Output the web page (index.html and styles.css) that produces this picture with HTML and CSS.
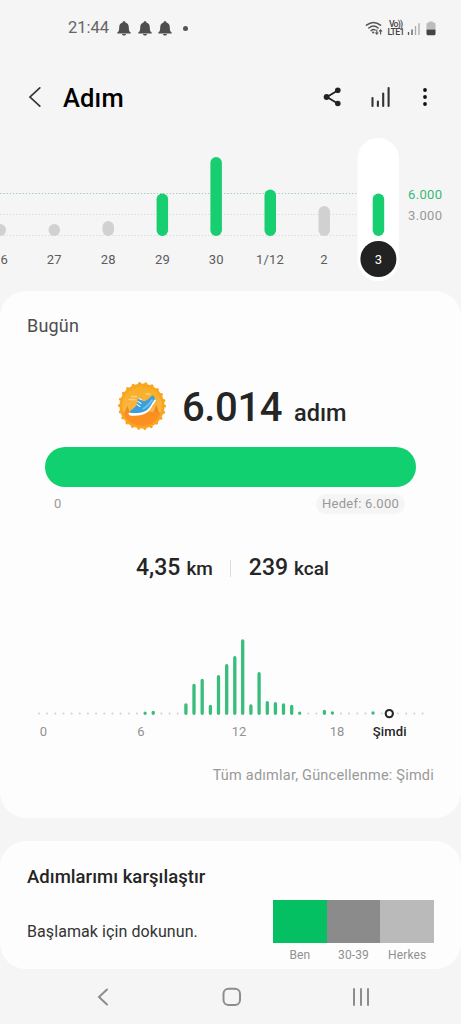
FILE: index.html
```html
<!DOCTYPE html>
<html lang="tr">
<head>
<meta charset="utf-8">
<title>Adım</title>
<link rel="stylesheet" href="styles.css">
</head>
<body>
<div class="screen">
  <div class="status">
    <div class="status-left">
      <span class="clock">21:44</span>
      <svg class="bell" viewBox="0 0 14 15"><path d="M7 .3c.9 0 1.400.5 1.400 1.300 2.400.7 3.400 2.500 3.400 4.900 0 2.800.4 3.900 1.900 5.100v1H.3v-1C1.800 10.400 2.200 9.300 2.200 6.500c0-2.400 1-4.200 3.400-4.900C5.600.8 6.100.3 7 .3zM5 13h4c-.2 1-1 1.600-2 1.600S5.200 14 5 13z"/></svg>
      <svg class="bell" viewBox="0 0 14 15"><path d="M7 .3c.9 0 1.400.5 1.400 1.300 2.400.7 3.400 2.500 3.400 4.900 0 2.800.4 3.900 1.900 5.100v1H.3v-1C1.800 10.400 2.200 9.300 2.200 6.500c0-2.400 1-4.200 3.400-4.900C5.600.8 6.100.3 7 .3zM5 13h4c-.2 1-1 1.600-2 1.600S5.200 14 5 13z"/></svg>
      <svg class="bell" viewBox="0 0 14 15"><path d="M7 .3c.9 0 1.400.5 1.400 1.300 2.400.7 3.400 2.500 3.400 4.900 0 2.800.4 3.900 1.900 5.100v1H.3v-1C1.800 10.400 2.200 9.300 2.200 6.500c0-2.400 1-4.200 3.400-4.900C5.600.8 6.100.3 7 .3zM5 13h4c-.2 1-1 1.600-2 1.600S5.200 14 5 13z"/></svg>
      <span class="more-dot"></span>
    </div>
    <svg class="status-right" viewBox="0 0 72 18">
      <g fill="none" stroke="#555" stroke-width="1.500" stroke-linecap="round">
        <path d="M1.500 6.200Q8.500 .8 15.500 6.200"/><path d="M3.800 9Q8.500 5.200 13.200 9"/><path d="M6.100 11.600Q8.500 9.600 10.200 11"/>
      </g>
      <circle cx="8.200" cy="13.500" r="1.100" fill="#555"/>
      <path d="M11.800 10.500v4.500m-1.500-1.500 1.500 1.700 1.500-1.700M15.600 15.500V11m-1.500 1.500 1.500-1.700 1.500 1.700" fill="none" stroke="#555" stroke-width="1.100"/>
      <text class="volte" x="24" y="8" textLength="14">Vo))</text>
      <text class="volte" x="22.500" y="16" textLength="17">LTE1</text>
      <g stroke-width="1.300"><path d="M43.500 13v3M47 10.500V16" stroke="#555"/><path d="M50.500 7v9M54 4.200V16" stroke="#aaa"/></g>
      <path d="M63 3.400h1.200v-1h3.600v1H69a1.500 1.500 0 0 1 1.500 1.500V10.500h-9V4.900A1.500 1.500 0 0 1 63 3.400z" fill="#bcbcbc"/>
      <path d="M61.500 10.500h9v4.300a1.500 1.500 0 0 1-1.500 1.500h-6a1.500 1.500 0 0 1-1.500-1.500z" fill="#444"/>
    </svg>
  </div>

  <header class="appbar">
    <svg class="back" viewBox="0 0 14 22"><path d="M11.800 1.800 2 11l9.800 9.200"/></svg>
    <h1 class="title">Adım</h1>
    <div class="actions">
      <svg class="share" viewBox="0 0 20 22"><path d="M16 4.200 5 11l11 6.800" fill="none" stroke="#222" stroke-width="1.800"/><g fill="#222"><circle cx="15.800" cy="4.300" r="2.800"/><circle cx="4.600" cy="11" r="2.900"/><circle cx="15.800" cy="17.500" r="2.800"/></g></svg>
      <svg class="bars" viewBox="0 0 20 22"><path d="M2.500 12v8M7.900 15.500V20M13.200 7.500V20M18.600 2v18"/></svg>
      <svg class="dots" viewBox="0 0 6 22"><circle cx="3" cy="4" r="1.900"/><circle cx="3" cy="11" r="1.900"/><circle cx="3" cy="18" r="1.900"/></svg>
    </div>
  </header>

  <svg class="week" viewBox="0 130 461 161">
    <g fill="none" stroke-dasharray="1.300 1.900">
      <path d="M0 193.500H358" stroke="#a2c9b8"/>
      <path d="M0 214.500H358M0 235.500H358" stroke="#dcdcdc"/>
    </g>
    <rect x="357.500" y="138" width="41.500" height="143" rx="20.700" fill="#fff"/>
    <g fill="#d1d1d1">
      <rect x="-5.500" y="224" width="11.500" height="12" rx="5.750"/>
      <rect x="48.500" y="224" width="11.500" height="12" rx="5.750"/>
      <rect x="102.500" y="221" width="11.500" height="15" rx="5.750"/>
      <rect x="318.500" y="206" width="11.500" height="30" rx="5.750"/>
    </g>
    <g fill="#17ce71">
      <rect x="156.600" y="193.500" width="11.500" height="42.500" rx="5.750"/>
      <rect x="210.400" y="157" width="11.500" height="79" rx="5.750"/>
      <rect x="264.500" y="189.500" width="11.500" height="46.500" rx="5.750"/>
      <rect x="372.700" y="193.500" width="11.500" height="42.500" rx="5.750"/>
    </g>
    <circle cx="378.400" cy="259" r="18" fill="#222"/>
    <g class="day">
      <text x="4.300" y="263.500">6</text><text x="54.300" y="263.500">27</text><text x="108.200" y="263.500">28</text>
      <text x="162.500" y="263.500">29</text><text x="216.300" y="263.500">30</text><text x="270" y="263.500">1/12</text>
      <text x="324" y="263.500">2</text><text class="day-now" x="378.400" y="263.500">3</text>
    </g>
    <text class="scale scale-goal" x="408" y="199" textLength="34">6.000</text>
    <text class="scale" x="408" y="220" textLength="34">3.000</text>
  </svg>

  <main class="card today">
    <h2 class="today-title">Bugün</h2>
    <div class="count">
      <svg class="badge" viewBox="0 0 50 50">
        <defs><linearGradient id="sky" x1="0" y1="0" x2="0" y2="1"><stop offset="0" stop-color="#f9ad24"/><stop offset="1" stop-color="#fcbc58"/></linearGradient></defs>
        <circle cx="25" cy="25" r="22.500" fill="#f9a51f"/>
        <circle cx="25" cy="25" r="22.500" fill="none" stroke="#f9a51f" stroke-width="3.200" stroke-linecap="round" stroke-dasharray="0 6.426"/>
        <circle cx="25" cy="25" r="19.800" fill="url(#sky)"/>
        <path d="M6.200 31.500Q25 29.500 43.800 31.500A19.800 19.800 0 0 1 6.200 31.500z" fill="#fb9021"/>
        <path d="M7.500 31.500l3-6.500 2.500 6.500zM36.500 31.500l2.800-8 2.700 8z" fill="#ee8a1e"/>
        <path d="M12 18.500h6M14.500 15.500h5M29 13h4" stroke="#ffd083" stroke-width="1.400" stroke-linecap="round"/>
        <path d="M11.500 32c-.3 2 1.500 2.800 4.500 2.800 5 .2 10-.2 14-3.200 4.500-3.500 6-8.500 9-12.100L37 17z" fill="#fff"/>
        <path d="M12.500 31.800c.6-2.600 3.800-3.800 6-6.300 1.600-1.800 2-5.500 3-8.500l3.200 1.500c.3 1.700 2 2.200 4.500 1 2.800-1.300 4.300-4.500 7-5.300L38.300 18c-3 2.700-4.300 7.800-8.300 10.900-4.500 3.400-11.500 3.300-17.500 2.900z" fill="#3a9fdb"/>
        <path d="M20 23.500l3 2M21 20.500l3 2M22 17.500l2.500 1.300" stroke="#e4f6ff" stroke-width="1.100" stroke-linecap="round"/>
        <path d="M25.500 28c4.500-1.500 7.500-6 10-9.500" fill="none" stroke="#6fc4ee" stroke-width="1.800"/>
      </svg>
      <span class="steps">6.014</span><span class="steps-unit">adım</span>
    </div>
    <div class="progress"></div>
    <div class="range"><span>0</span><span class="goal">Hedef: 6.000</span></div>
    <div class="totals">
      <div class="total"><span class="num">4,35</span><span class="unit">km</span></div>
      <div class="divider"></div>
      <div class="total"><span class="num">239</span><span class="unit">kcal</span></div>
    </div>
    <svg class="hours" viewBox="0 630 461 115">
      <path d="M39 713.500H423" fill="none" stroke="#cfcfcf" stroke-width="2" stroke-linecap="round" stroke-dasharray="0 8.160"/>
      <g fill="none" stroke="#38bd7c" stroke-width="3.300" stroke-linecap="round">
        <path d="M145.100 713.200v.1M153.200 712.300v1M185.900 704.800v8.500M194 685.500v27.800M202.200 680.500v32.800M210.400 706.500v6.800M218.500 676.700v36.600M226.700 665.700v47.600M234.800 657.700v55.600M242.700 641v72.300M250.900 706v7.300M259.100 673.700v39.600M267.300 702.700v10.600M275.400 703.700v9.600M283.500 705v8.300M291.700 706.500v6.800M299.700 713.100v.1M324.400 711.300v2M332.400 713v.1M373 713v.1"/>
      </g>
      <circle cx="389.300" cy="713.600" r="3.600" fill="#fdfdfd" stroke="#252525" stroke-width="2.100"/>
      <g class="hour">
        <text x="43.400" y="735.500">0</text><text x="140.800" y="735.500">6</text><text x="239" y="735.500">12</text><text x="337" y="735.500">18</text>
        <text class="hour-now" x="389.700" y="735.500" textLength="34">Şimdi</text>
      </g>
    </svg>
    <p class="updated">Tüm adımlar, Güncellenme: Şimdi</p>
  </main>

  <section class="card compare">
    <h2 class="compare-title">Adımlarımı karşılaştır</h2>
    <div class="compare-row">
      <p class="hint">Başlamak için dokunun.</p>
      <div class="groups">
        <div class="group"><div class="swatch me"></div><span>Ben</span></div>
        <div class="group"><div class="swatch peers"></div><span>30-39</span></div>
        <div class="group"><div class="swatch all"></div><span>Herkes</span></div>
      </div>
    </div>
  </section>

  <nav class="nav">
    <svg viewBox="0 0 20 20"><path d="M14 2.500 6 10l8 7.500"/></svg>
    <svg viewBox="0 0 20 20"><rect x="1.500" y="1.800" width="16.500" height="16.200" rx="5"/></svg>
    <svg viewBox="0 0 20 20"><path d="M3 2v16M10 2v16M17 2v16"/></svg>
  </nav>
</div>
</body>
</html>
```

FILE: styles.css
```css
* { box-sizing: border-box; margin: 0; padding: 0; }
body { background: #f5f5f5; font-family: Roboto, "Noto Sans", sans-serif; color: #252525; }
svg { display: block; flex: none; }
.screen { width: 461px; height: 1024px; overflow: hidden; display: flex; flex-direction: column; background: #f5f5f5; }

.status { height: 56px; padding: 0 24px 0 68px; display: flex; align-items: center; justify-content: space-between; flex: none; }
.status-left { display: flex; align-items: center; }
.clock { font-size: 16.5px; line-height: 20px; color: #666; margin-right: 7px; width: 42px; white-space: nowrap; }
.bell { width: 14px; height: 15px; margin-right: 6.5px; fill: #4e4e4e; }
.more-dot { width: 5px; height: 5px; border-radius: 50%; background: #555; margin-left: 4px; }
.status-right { width: 72px; height: 18px; }
.volte { font-size: 8.8px; font-weight: 500; fill: #444; }

.appbar { height: 74px; padding: 4px 33px 0 28px; display: flex; align-items: center; flex: none; }
.back { width: 14px; height: 22px; fill: none; stroke: #333; stroke-width: 1.700; stroke-linecap: round; margin-top: 4px; }
.title { font-size: 25.5px; line-height: 30px; font-weight: 500; color: #000; margin-left: 21px; margin-top: 6px; letter-spacing: .15px; }
.actions { display: flex; align-items: center; margin: 4px 0 0 auto; }
.share { width: 20px; height: 22px; margin-right: 28px; }
.bars { width: 20px; height: 22px; margin-right: 32px; fill: none; stroke: #333; stroke-width: 2.100; stroke-linecap: round; }
.dots { width: 6px; height: 22px; fill: #111; }

.week { width: 461px; height: 161px; }
.day { font-size: 13px; fill: #5c5c5c; text-anchor: middle; letter-spacing: .2px; }
.day-now { fill: #fff; }
.scale { font-size: 13px; fill: #999; }
.scale-goal { fill: #35b978; }

.card { background: #fdfdfd; border-radius: 26px; flex: none; }
.today { height: 527px; display: flex; flex-direction: column; }
.today-title { font-size: 18px; line-height: 22px; font-weight: 400; color: #4d4d4d; margin: 24px 0 0 27px; letter-spacing: .2px; }
.count { height: 50px; margin: 44px 0 0 117px; display: flex; align-items: baseline; }
.badge { width: 50px; height: 50px; align-self: flex-start; }
.steps { font-size: 40px; line-height: 54px; font-weight: 500; margin-left: 15px; width: 102px; letter-spacing: -.4px; }
.steps-unit { font-size: 23.5px; line-height: 30px; font-weight: 500; margin-left: 10px; }
.progress { height: 40px; margin: 16px 45px 0; border-radius: 20px; background: #11d06f; }
.range { display: flex; justify-content: space-between; align-items: center; margin: 7px 56px 0 54px; height: 20px; font-size: 13px; line-height: 18px; color: #999; }
.goal { background: #f5f5f5; border-radius: 10px; padding: 0 6px; line-height: 20px; letter-spacing: .25px; }
.totals { display: flex; align-items: center; margin: 40px 0 0 136px; height: 28px; }
.total { display: flex; align-items: baseline; }
.num { font-size: 23px; font-weight: 500; line-height: 28px; }
.unit { font-size: 19px; font-weight: 500; line-height: 28px; margin-left: 6px; }
.divider { width: 1px; height: 17px; background: #dcdcdc; margin: 0 18px 0 17px; }
.hours { width: 461px; height: 115px; margin-top: 48px; }
.hour { font-size: 13px; fill: #929292; text-anchor: middle; }
.hour-now { fill: #252525; font-weight: 500; }
.updated { font-size: 14.5px; line-height: 18px; color: #999; text-align: right; margin: 22px 27px 0 0; letter-spacing: .22px; }

.compare { height: 128px; margin-top: 23px; padding: 25px 27px 0; }
.compare-title { font-size: 18.5px; line-height: 22px; font-weight: 500; letter-spacing: .04px; }
.compare-row { display: flex; justify-content: space-between; align-items: flex-start; margin-top: 12px; }
.hint { font-size: 16px; line-height: 20px; margin-top: 22px; color: #333; letter-spacing: .08px; }
.groups { display: flex; width: 161px; }
.group { flex: 1; display: flex; flex-direction: column; align-items: center; font-size: 12px; line-height: 14px; color: #909090; letter-spacing: .1px; }
.swatch { width: 100%; height: 43px; margin-bottom: 5px; }
.me { background: #04c062; }
.peers { background: #8b8b8b; }
.all { background: #bababa; }

.nav { height: 55px; display: flex; justify-content: space-between; align-items: center; padding: 0 90px 0 93px; }
.nav svg { width: 20px; height: 20px; fill: none; stroke: #8d8d8d; stroke-width: 2; stroke-linecap: round; }
```
